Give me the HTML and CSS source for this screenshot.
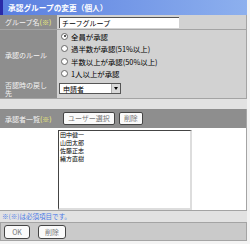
FILE: index.html
```html
<!DOCTYPE html>
<html lang="ja">
<head>
    <meta charset="UTF-8">
    <title>承認グループの変更</title>
    <link rel="stylesheet" href="styles.css">
</head>
<body>
    <div class="page">
        <div class="title">承認グループの変更（個人）</div>
        <div class="row row-name">
            <div class="label">グループ名<span class="req">(※)</span></div>
            <div class="cell">
                <div class="textbox">チーフグループ</div>
            </div>
        </div>
        <div class="row row-rule">
            <div class="label">承認のルール</div>
            <div class="cell radios">
                <div class="radio-item"><span class="radio checked"></span>全員が承認</div>
                <div class="radio-item"><span class="radio"></span>過半数が承認(51%以上)</div>
                <div class="radio-item"><span class="radio"></span>半数以上が承認(50%以上)</div>
                <div class="radio-item"><span class="radio"></span>1人以上が承認</div>
            </div>
        </div>
        <div class="row row-back">
            <div class="label">否認時の戻し先</div>
            <div class="cell">
                <div class="select"><span class="select-text">申請者</span><span class="select-arrow"></span></div>
            </div>
        </div>
        <div class="approver-bar">
            <div class="bar-label">承認者一覧<span class="req">(※)</span></div>
            <span class="btn">ユーザー選択</span>
            <span class="btn">削除</span>
        </div>
        <div class="approver-body">
            <div class="listbox">
                <div>田中健一</div>
                <div>山田太郎</div>
                <div>佐藤正志</div>
                <div>緒方直樹</div>
            </div>
        </div>
        <div class="note">※(※)は必須項目です。</div>
        <div class="footer">
            <span class="btn btn-ok">OK</span>
            <span class="btn">削除</span>
        </div>
    </div>
</body>
</html>
```

FILE: styles.css
```css
body { margin: 0; background: #f4f4f4; font-family: "Noto Sans CJK JP", "Liberation Sans", sans-serif; font-size: 7px; color: #000; }
.page { width: 247px; height: 241px; background: #e2e2e2; }
.title { height: 15px; line-height: 15px; padding-left: 5px; background: linear-gradient(to right, #5a7fe0, #8db0ee); border-left: 3px solid #2a2aa8; box-sizing: border-box; color: #fff; font-weight: bold; font-size: 7.7px; }
.row { display: grid; grid-template-columns: 57px 1fr; border-bottom: 1px solid #a4a4a4; border-right: 1px solid #a4a4a4; }
.label { background: #8e8e8e; color: #f4f4f4; padding-left: 5px; display: flex; align-items: center; line-height: 8px; }
.req { color: #f4f478; }
.cell { background: #d2d2d2; display: flex; align-items: center; padding-left: 2px; }
.row-name { height: 14px; }
.row-rule { height: 48px; }
.row-back { height: 19px; margin-bottom: 10px; }
.row-back .label { padding-right: 6px; }
.textbox { width: 117px; height: 10px; line-height: 10px; background: #fff; border-top: 1px solid #555; border-left: 1px solid #555; padding-left: 2px; }
.radios { flex-direction: column; align-items: flex-start; justify-content: center; padding-left: 4px; font-size: 7.4px; }
.radio-item { display: flex; align-items: center; height: 12.5px; }
.radio { width: 5px; height: 5px; border: 1px solid #666; border-radius: 50%; background: #fff; margin-right: 3px; position: relative; }
.radio.checked::after { content: ""; position: absolute; left: 1.5px; top: 1.5px; width: 2px; height: 2px; border-radius: 50%; background: #222; }
.select { width: 62px; height: 11px; background: #fff; border: 1px solid #555; display: flex; align-items: center; box-sizing: border-box; }
.select-text { flex: 1; padding-left: 3px; }
.select-arrow { width: 8px; height: 9px; background: #d8d8d8; border-left: 1px solid #aaa; position: relative; }
.select-arrow::after { content: ""; position: absolute; left: 2px; top: 3px; border-left: 2px solid transparent; border-right: 2px solid transparent; border-top: 3px solid #000; }
.approver-bar { height: 19px; background: #8e8e8e; border-right: 1px solid #a4a4a4; display: flex; align-items: center; padding-left: 5px; }
.bar-label { width: 58px; color: #f4f4f4; }
.btn { display: inline-block; height: 11px; line-height: 11px; padding: 0 4px; background: #fafafa; border: 1px solid #444; border-radius: 2px; color: #777; margin-right: 4px; }
.approver-body { height: 83px; background: #fff; border-bottom: 1px solid #a4a4a4; border-right: 1px solid #a4a4a4; padding: 2px 0 0 58px; box-sizing: border-box; }
.listbox { width: 134px; height: 80px; border-top: 1px solid #444; border-left: 1px solid #444; border-right: 2px solid #ddd; border-bottom: 2px solid #ddd; box-sizing: border-box; padding-left: 1px; font-size: 6px; line-height: 8px; }
.note { height: 11px; line-height: 11px; padding-left: 2px; color: #4a7ae8; font-size: 6.5px; }
.footer { height: 19px; background: #cacaca; border: 1px solid #a4a4a4; box-sizing: border-box; display: flex; align-items: center; padding-left: 3px; }
.footer .btn { height: 12px; line-height: 12px; padding: 0 6px; margin-right: 8px; border-radius: 3px; }
.btn-ok { width: 12px; text-align: center; }
```
